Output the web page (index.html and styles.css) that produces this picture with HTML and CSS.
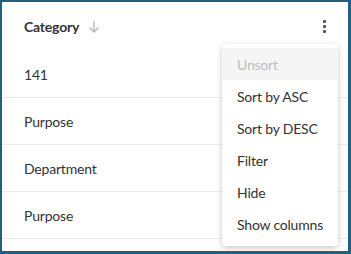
FILE: index.html
```html
<!DOCTYPE html>
<html lang="en">
<head>
  <meta charset="UTF-8">
  <title>Category column</title>
  <link rel="stylesheet" href="styles.css">
</head>
<body>
  <div class="frame">
    <div class="grid">
      <div class="header">
        <span class="title">Category</span>
        <svg class="sort-icon" width="12" height="14" viewBox="0 0 12 14">
          <path d="M6 1v11M1.5 7.5L6 12l4.5-4.5" fill="none" stroke="#b5b5b5" stroke-width="1.3"/>
        </svg>
        <span class="kebab"><i></i><i></i><i></i></span>
      </div>
      <div class="row">141</div>
      <div class="row">Purpose</div>
      <div class="row">Department</div>
      <div class="row">Purpose</div>
    </div>

    <!-- column menu -->
    <ul class="menu">
      <li class="disabled">Unsort</li>
      <li>Sort by ASC</li>
      <li>Sort by DESC</li>
      <li>Filter</li>
      <li>Hide</li>
      <li>Show columns</li>
    </ul>
  </div>
</body>
</html>
```
FILE: styles.css
```css
html, body {
  margin: 0;
  padding: 0;
}
body {
  font-family: Lato, "Open Sans", sans-serif;
  color: #333;
  background: #fff;
  letter-spacing: -0.2px;
}
.frame {
  position: relative;
  width: 351px;
  height: 254px;
  box-sizing: border-box;
  border-style: solid;
  border-color: #235e83;
  border-width: 2px 3px 3px 2px;
  overflow: hidden;
}
.grid {
  display: flex;
  flex-direction: column;
}
.header {
  height: 49px;
  display: flex;
  align-items: center;
  padding: 0 22px 0 22px;
}
.title {
  font-size: 14px;
  font-weight: 700;
  color: #333;
}
.sort-icon {
  margin-left: 9px;
}
.kebab {
  margin-left: auto;
  display: flex;
  flex-direction: column;
  gap: 2px;
}
.kebab i {
  display: block;
  width: 3px;
  height: 3px;
  background: #555;
  border-radius: 1px;
}
.row {
  height: 47px;
  box-sizing: border-box;
  display: flex;
  align-items: center;
  padding-left: 22px;
  font-size: 14px;
  border-bottom: 1px solid #ececec;
}
.menu {
  position: absolute;
  left: 220px;
  top: 42px;
  width: 116px;
  margin: 0;
  padding: 4px 0 6px;
  list-style: none;
  background: #fff;
  border-radius: 4px;
  box-shadow: 0 2px 6px rgba(0,0,0,0.22);
}
.menu li {
  height: 32px;
  display: flex;
  align-items: center;
  padding-left: 15px;
  font-size: 14px;
  color: #333;
}
.menu li.disabled {
  background: #f5f5f5;
  color: #bdbdbd;
}
```
